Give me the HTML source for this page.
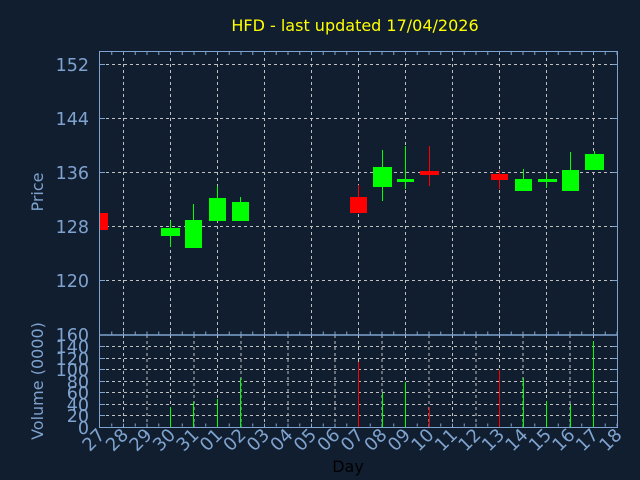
<!DOCTYPE html>
<html><head><meta charset="utf-8"><style>
html,body{margin:0;padding:0;background:#111e2f;}
svg{display:block;font-family:"DejaVu Sans","Liberation Sans",sans-serif;}
</style></head><body>
<svg width="640" height="480" viewBox="0 0 640 480" xmlns="http://www.w3.org/2000/svg">
<rect width="640" height="480" fill="#111e2f"/>
<text x="355" y="31" fill="#ffff00" font-size="16" text-anchor="middle">HFD - last updated 17/04/2026</text>
<g stroke="#c0c0c0" stroke-width="1" stroke-dasharray="3 3" fill="none">
<path d="M100 64.5H617M100 118.5H617M100 172.5H617M100 226.5H617M100 280.5H617"/>
<path d="M123.5 52V335M170.5 52V335M217.5 52V335M264.5 52V335M311.5 52V335M358.5 52V335M405.5 52V335M452.5 52V335M499.5 52V335M546.5 52V335M593.5 52V335"/>
<path d="M100 346.5H617M100 358.5H617M100 369.5H617M100 381.5H617M100 392.5H617M100 404.5H617M100 415.5H617"/>
<path d="M123.5 335V427M147 335V427M170.5 335V427M194 335V427M217.5 335V427M241 335V427M264.5 335V427M288 335V427M311.5 335V427M335 335V427M358.5 335V427M382 335V427M405.5 335V427M429 335V427M452.5 335V427M476 335V427M499.5 335V427M523 335V427M546.5 335V427M570 335V427M593.5 335V427"/>
</g>
<g stroke="#7fa3cf" fill="none">
<rect x="99.5" y="51.5" width="518" height="376"/>
<line x1="99.5" y1="335" x2="617.5" y2="335" stroke-width="1.5"/>
<line x1="111.25" y1="53.5" x2="617" y2="53.5" stroke-width="3" stroke-dasharray="1 10.75"/>
<line x1="111.25" y1="333" x2="617" y2="333" stroke-width="3" stroke-dasharray="1 10.75"/>
<line x1="111.25" y1="425" x2="617" y2="425" stroke-width="3" stroke-dasharray="1 10.75"/>
<path d="M100 64.5h5M100 118.5h5M100 172.5h5M100 226.5h5M100 280.5h5M612 64.5h5M612 118.5h5M612 172.5h5M612 226.5h5M612 280.5h5"/>
<path d="M100 346.5h5M100 358.5h5M100 369.5h5M100 381.5h5M100 392.5h5M100 404.5h5M100 415.5h5M612 346.5h5M612 358.5h5M612 369.5h5M612 381.5h5M612 392.5h5M612 404.5h5M612 415.5h5"/>
</g>
<g fill="#7fa3cf" font-size="17.5" text-anchor="end">
<text x="89" y="71">152</text><text x="89" y="125">144</text><text x="89" y="179">136</text><text x="89" y="233">128</text><text x="89" y="287">120</text>
</g>
<g fill="#7fa3cf" font-size="17.5" text-anchor="end">
<text x="89" y="341">160</text><text x="89" y="353">140</text><text x="89" y="365">120</text><text x="89" y="376">100</text><text x="89" y="388">80</text><text x="89" y="399">60</text><text x="89" y="411">40</text><text x="89" y="422">20</text><text x="89" y="434">0</text>
</g>
<text transform="translate(43 192) rotate(-90)" fill="#7fa3cf" font-size="16" text-anchor="middle">Price</text>
<text transform="translate(43 381) rotate(-90)" fill="#7fa3cf" font-size="16" text-anchor="middle">Volume (0000)</text>
<g fill="#7fa3cf" font-size="18" text-anchor="end">
<text transform="translate(106 436) rotate(-45)">27</text>
<text transform="translate(129.5 436) rotate(-45)">28</text>
<text transform="translate(153 436) rotate(-45)">29</text>
<text transform="translate(176.5 436) rotate(-45)">30</text>
<text transform="translate(200 436) rotate(-45)">31</text>
<text transform="translate(223.5 436) rotate(-45)">01</text>
<text transform="translate(247 436) rotate(-45)">02</text>
<text transform="translate(270.5 436) rotate(-45)">03</text>
<text transform="translate(294 436) rotate(-45)">04</text>
<text transform="translate(317.5 436) rotate(-45)">05</text>
<text transform="translate(341 436) rotate(-45)">06</text>
<text transform="translate(364.5 436) rotate(-45)">07</text>
<text transform="translate(388 436) rotate(-45)">08</text>
<text transform="translate(411.5 436) rotate(-45)">09</text>
<text transform="translate(435 436) rotate(-45)">10</text>
<text transform="translate(458.5 436) rotate(-45)">11</text>
<text transform="translate(482 436) rotate(-45)">12</text>
<text transform="translate(505.5 436) rotate(-45)">13</text>
<text transform="translate(529 436) rotate(-45)">14</text>
<text transform="translate(552.5 436) rotate(-45)">15</text>
<text transform="translate(576 436) rotate(-45)">16</text>
<text transform="translate(599.5 436) rotate(-45)">17</text>
<text transform="translate(623 436) rotate(-45)">18</text>
</g>
<text x="348" y="472" fill="#000000" font-size="16" text-anchor="middle">Day</text>
<g stroke-width="1">
<path stroke="#00ff00" d="M170.5 221V247M193.5 204V248M217.5 186V198M240.5 197V202M382.5 150V201M405.5 146V189M523.5 169V179M546.5 174V188M570.5 152V170M594.5 151V154"/>
<path stroke="#ff0000" d="M358.5 185V197M429.5 146V186M499.5 170V189"/>
</g>
<g fill="#00ff00">
<rect x="161" y="228" width="19" height="8"/>
<rect x="185" y="220" width="17" height="28"/>
<rect x="209" y="198" width="17" height="23"/>
<rect x="232" y="202" width="17" height="19"/>
<rect x="373" y="167" width="19" height="20"/>
<rect x="397" y="179" width="17" height="3"/>
<rect x="515" y="179" width="17" height="12"/>
<rect x="538" y="179" width="19" height="3"/>
<rect x="562" y="170" width="17" height="21"/>
<rect x="585" y="154" width="19" height="16"/>
</g>
<g fill="#ff0000">
<rect x="100" y="213" width="8" height="17"/>
<rect x="350" y="197" width="17" height="16"/>
<rect x="420" y="171" width="19" height="4"/>
<rect x="491" y="174" width="17" height="6"/>
</g>
<path stroke="#00ff00" d="M170.5 407V427M193.5 402V427M217.5 399V427M240.5 378V427M382.5 393V427M405.5 382V427M523.5 378V427M546.5 401V427M570.5 405V427M593.5 341V427"/>
<path stroke="#ff0000" d="M358.5 362V427M429.5 407V427M499.5 370V427"/>
</svg>
</body></html>
